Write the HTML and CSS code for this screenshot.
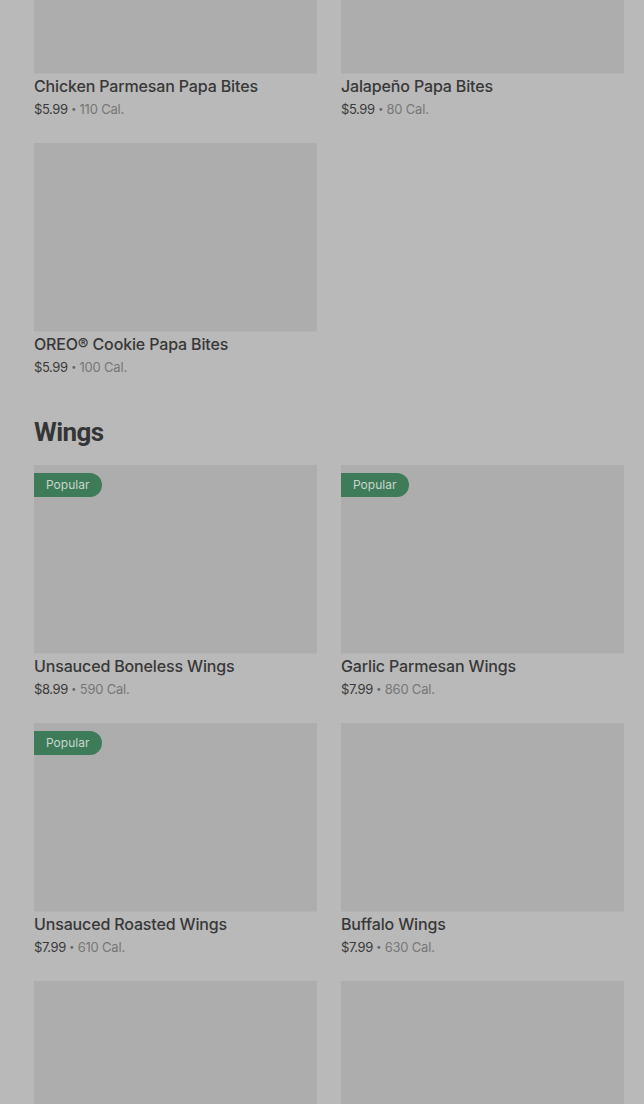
FILE: index.html
```html
<!DOCTYPE html>
<html lang="en">
<head>
  <meta charset="UTF-8">
  <meta name="viewport" content="width=device-width, initial-scale=1.0">
  <title>Menu</title>
  <link rel="stylesheet" href="styles.css">
</head>
<body>
  <main class="menu">
    <section class="category">
      <div class="grid">
        <div class="card">
          <div class="photo"></div>
          <div class="name">Chicken Parmesan Papa Bites</div>
          <div class="meta"><span class="price">$5.99</span> <span class="dot">•</span> <span class="cal">110 Cal.</span></div>
        </div>
        <div class="card">
          <div class="photo"></div>
          <div class="name">Jalapeño Papa Bites</div>
          <div class="meta"><span class="price">$5.99</span> <span class="dot">•</span> <span class="cal">80 Cal.</span></div>
        </div>
        <div class="card">
          <div class="photo"></div>
          <div class="name">OREO® Cookie Papa Bites</div>
          <div class="meta"><span class="price">$5.99</span> <span class="dot">•</span> <span class="cal">100 Cal.</span></div>
        </div>
      </div>
    </section>

    <section class="category">
      <h2>Wings</h2>
      <div class="grid">
        <div class="card">
          <div class="photo"><span class="badge">Popular</span></div>
          <div class="name">Unsauced Boneless Wings</div>
          <div class="meta"><span class="price">$8.99</span> <span class="dot">•</span> <span class="cal">590 Cal.</span></div>
        </div>
        <div class="card">
          <div class="photo"><span class="badge">Popular</span></div>
          <div class="name">Garlic Parmesan Wings</div>
          <div class="meta"><span class="price">$7.99</span> <span class="dot">•</span> <span class="cal">860 Cal.</span></div>
        </div>
        <div class="card">
          <div class="photo"><span class="badge">Popular</span></div>
          <div class="name">Unsauced Roasted Wings</div>
          <div class="meta"><span class="price">$7.99</span> <span class="dot">•</span> <span class="cal">610 Cal.</span></div>
        </div>
        <div class="card">
          <div class="photo"></div>
          <div class="name">Buffalo Wings</div>
          <div class="meta"><span class="price">$7.99</span> <span class="dot">•</span> <span class="cal">630 Cal.</span></div>
        </div>
        <div class="card">
          <div class="photo"></div>
        </div>
        <div class="card">
          <div class="photo"></div>
        </div>
      </div>
    </section>
  </main>
</body>
</html>
```

FILE: styles.css
```css
body {
  margin: 0;
  background: #b9b9b9;
  font-family: Inter, "Noto Sans", Arial, sans-serif;
  color: #333;
  overflow: hidden;
}
.menu {
  margin-top: -115px;
  padding: 0 20px 0 34px;
}
.category {
  margin-bottom: 37px;
}
.category h2 {
  margin: 0 0 17px;
  font-family: Roboto, Inter, Arial, sans-serif;
  font-size: 26px;
  line-height: 32px;
  font-weight: 700;
  letter-spacing: -0.6px;
  color: #353535;
}
.grid {
  display: grid;
  grid-template-columns: 1fr 1fr;
  column-gap: 24px;
  row-gap: 22px;
}
.photo {
  position: relative;
  height: 188px;
  background: #adadad;
  border-bottom: 1px solid #b3b3b3;
}
.badge {
  position: absolute;
  top: 8px;
  left: 0;
  height: 24px;
  line-height: 24px;
  padding: 0 13px 0 12px;
  background: #3e7b59;
  color: #c9d6cf;
  font-size: 12px;
  border-radius: 0 12px 12px 0;
}
.name {
  margin-top: 1px;
  font-size: 16px;
  line-height: 22px;
  font-weight: 500;
  letter-spacing: -0.15px;
  color: #383838;
}
.meta {
  font-size: 13px;
  line-height: 24px;
  height: 24px;
  letter-spacing: -0.2px;
  color: #666;
}
.price {
  color: #3a3a3a;
  letter-spacing: -0.4px;
}
.dot {
  font-size: 9px;
  line-height: 0;
  vertical-align: 2px;
  color: #666;
}
.cal {
  color: #777;
}
```
